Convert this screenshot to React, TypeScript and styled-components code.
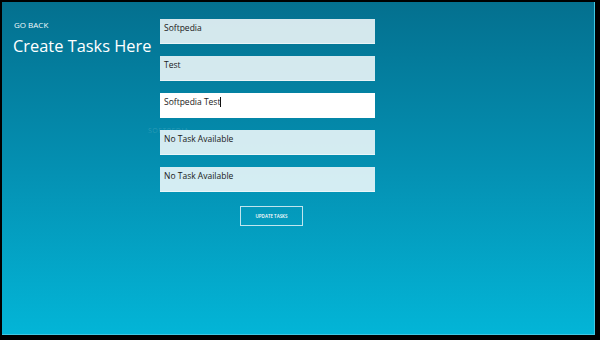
import React from 'react';
import styled, { createGlobalStyle } from 'styled-components';

const GlobalStyles = createGlobalStyle`
  html, body {
    margin: 0;
    padding: 0;
    background: #000;
  }
  body {
    font-family: "Open Sans", "Noto Sans", sans-serif;
  }
`;

const Frame = styled.div`
  width: 600px;
  height: 340px;
  box-sizing: border-box;
  padding: 2px 5px 5px 2px;
  background: #000;
`;

const Screen = styled.div`
  width: 100%;
  height: 100%;
  background: linear-gradient(180deg, #04708f 0%, #0490b2 50%, #03b5d7 100%);
  border-right: 1px solid #3fc7e2;
  border-bottom: 1px solid #3fc7e2;
  box-sizing: border-box;
  display: grid;
  grid-template-columns: 158px 215px;
  position: relative;
`;

const Header = styled.div`
  padding: 17px 0 0 11px;
  color: #fff;
`;

const BackLink = styled.div`
  font-size: 8px;
  margin: 0 0 6px 1px;
  color: #f2fafc;
`;

const Title = styled.h1`
  margin: 0;
  font-size: 16.4px;
  font-weight: 400;
  line-height: 1.2;
  white-space: nowrap;
`;

const Form = styled.div`
  padding-top: 17px;
  display: flex;
  flex-direction: column;
  gap: 12px;
  position: relative;
  z-index: 1;
`;

const Field = styled.div<{ $active?: boolean }>`
  height: 25px;
  box-sizing: border-box;
  padding: 3px 4px;
  font-size: 8.5px;
  color: #1a1a1a;
  background: ${(p) => (p.$active ? '#ffffff' : 'rgba(255, 255, 255, 0.83)')};
  border-bottom: 1px solid rgba(255, 255, 255, 0.5);
`;

const Caret = styled.span`
  display: inline-block;
  width: 1px;
  height: 10px;
  background: #111;
  vertical-align: -2px;
`;

const Actions = styled.div`
  display: flex;
  justify-content: center;
  padding-left: 8px;
  margin-top: 2px;
`;

const UpdateButton = styled.button`
  width: 63px;
  height: 20px;
  background: transparent;
  border: 1px solid rgba(255, 255, 255, 0.75);
  color: #fff;
  font-family: "Open Sans", sans-serif;
  font-size: 4.5px;
  font-weight: 600;
  padding: 0;
  cursor: pointer;
`;

const Watermark = styled.div`
  position: absolute;
  left: 146px;
  top: 124px;
  font-size: 7px;
  letter-spacing: 0.5px;
  color: rgba(255, 255, 255, 0.15);
`;

const tasks = ['Softpedia', 'Test', 'Softpedia Test', 'No Task Available', 'No Task Available'];

const App: React.FC = () => {
  return (
    <>
      <GlobalStyles />
      <Frame>
        <Screen>
          <Watermark>SOFTPEDIA</Watermark>
          <Header>
            <BackLink>GO BACK</BackLink>
            <Title>Create Tasks Here</Title>
          </Header>
          <Form>
            {tasks.map((t, i) => (
              <Field key={i} $active={i === 2}>
                {t}
                {i === 2 && <Caret />}
              </Field>
            ))}
            <Actions>
              <UpdateButton>UPDATE TASKS</UpdateButton>
            </Actions>
          </Form>
        </Screen>
      </Frame>
    </>
  );
};

export default App;
